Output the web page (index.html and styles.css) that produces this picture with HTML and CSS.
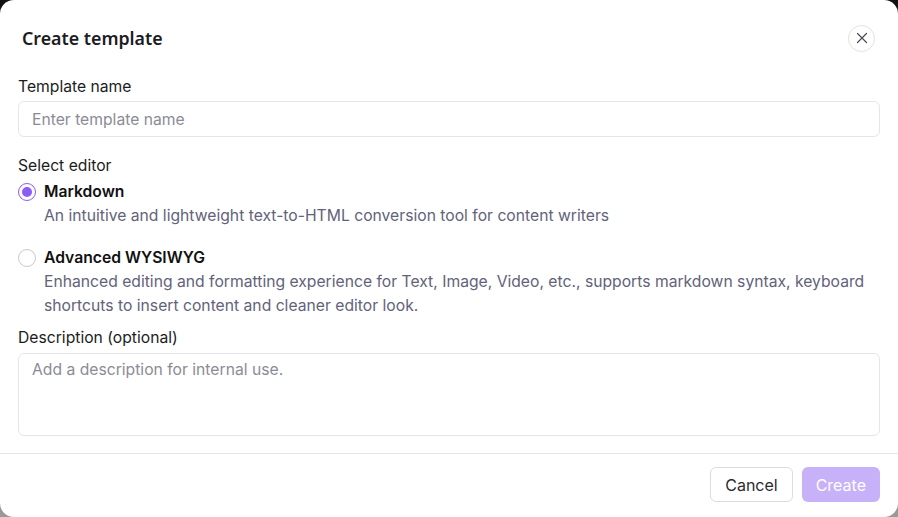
FILE: index.html
```html
<!DOCTYPE html>
<html lang="en">
<head>
  <meta charset="UTF-8" />
  <title>Create template</title>
  <link rel="stylesheet" href="styles.css">
</head>
<body>
  <div class="modal">
    <div class="modal-header">
      <h2 class="modal-title">Create template</h2>
      <button class="close-btn" aria-label="Close">
        <svg width="12" height="12" viewBox="0 0 12 12">
          <path d="M1.5 1.5 L10.5 10.5 M10.5 1.5 L1.5 10.5" stroke="#4b4b55" stroke-width="1.2" fill="none" stroke-linecap="round"/>
        </svg>
      </button>
    </div>

    <div class="modal-body">
      <div class="field">
        <label class="field-label">Template name</label>
        <input class="text-input" type="text" placeholder="Enter template name">
      </div>

      <div class="field field-editor">
        <label class="field-label">Select editor</label>
        <div class="option">
          <span class="radio checked"></span>
          <div class="option-text">
            <div class="option-title">Markdown</div>
            <div class="option-desc">An intuitive and lightweight text-to-HTML conversion tool for content writers</div>
          </div>
        </div>
        <div class="option">
          <span class="radio"></span>
          <div class="option-text">
            <div class="option-title">Advanced WYSIWYG</div>
            <div class="option-desc">Enhanced editing and formatting experience for Text, Image, Video, etc., supports markdown syntax, keyboard shortcuts to insert content and cleaner editor look.</div>
          </div>
        </div>
      </div>

      <div class="field">
        <label class="field-label">Description (optional)</label>
        <textarea class="text-area" placeholder="Add a description for internal use."></textarea>
      </div>
    </div>

    <div class="modal-footer">
      <button class="btn btn-cancel">Cancel</button>
      <button class="btn btn-create" disabled>Create</button>
    </div>
  </div>
</body>
</html>
```

FILE: styles.css
```css
html, body {
  height: 100%;
}

body {
  margin: 0;
  font-family: 'Inter', 'Liberation Sans', sans-serif;
  background: linear-gradient(to bottom, #111 0%, #3a3a3a 40%, #9a9a9a 100%);
  color: #1c1c22;
}

.modal {
  background: #fff;
  height: 100%;
  border-radius: 14px;
  display: flex;
  flex-direction: column;
  box-sizing: border-box;
}

.modal-header {
  display: flex;
  justify-content: space-between;
  align-items: center;
  padding: 24px 23px 0 22px;
  height: 28px;
  flex-shrink: 0;
}

.modal-title {
  margin: 0;
  font-family: 'Noto Sans', sans-serif;
  font-size: 17.8px;
  font-weight: 600;
  color: #1c1c22;
}

.close-btn {
  width: 27px;
  height: 27px;
  border-radius: 50%;
  border: 1px solid #e2e2e6;
  background: #fff;
  display: flex;
  align-items: center;
  justify-content: center;
  padding: 0;
  cursor: pointer;
}

.modal-body {
  padding: 25px 18px 0 18px;
  flex: 1;
}

.field {
  margin-bottom: 19px;
}

.field:last-child {
  margin-bottom: 0;
}

.field-editor {
  margin-bottom: 10px;
}

.field-label {
  display: block;
  font-size: 15.7px;
  line-height: 20px;
  color: #1c1c22;
  margin-bottom: 4px;
}

.field-editor .field-label {
  margin-bottom: 6px;
}

.text-input, .text-area {
  display: block;
  width: 100%;
  box-sizing: border-box;
  border: 1px solid #e6e6ea;
  border-radius: 6px;
  font-family: 'Inter', sans-serif;
  font-size: 15.7px;
  color: #1c1c22;
  padding: 0 13px;
  outline: none;
}

.text-input {
  height: 36px;
}

.text-area {
  height: 83px;
  margin-top: 5px;
  padding-top: 6px;
  resize: none;
}

.text-input::placeholder, .text-area::placeholder {
  color: #8b8b96;
}

.option {
  display: flex;
  align-items: flex-start;
  gap: 8px;
  margin-bottom: 20px;
}

.option:last-child {
  margin-bottom: 0;
}

.radio {
  width: 18px;
  height: 18px;
  border: 1px solid #c9c9cf;
  border-radius: 50%;
  flex-shrink: 0;
  margin-top: 1px;
  box-sizing: border-box;
  position: relative;
}

.radio.checked {
  border: 1.5px solid #8b5cf6;
}

.radio.checked::after {
  content: "";
  position: absolute;
  top: 2.5px;
  left: 2.5px;
  width: 10px;
  height: 10px;
  border-radius: 50%;
  background: #8b5cf6;
}

.option-text {
  flex: 1;
}

.option-title {
  font-size: 15.7px;
  font-weight: 600;
  line-height: 20px;
  color: #111;
}

.option-desc {
  font-size: 15.7px;
  line-height: 24px;
  margin-top: 2px;
  color: #62627a;
}

.modal-footer {
  border-top: 1px solid #e6e6ea;
  display: flex;
  justify-content: flex-end;
  gap: 9px;
  padding: 13px 18px 15px 18px;
}

.btn {
  height: 35px;
  border-radius: 6px;
  font-family: 'Inter', sans-serif;
  font-size: 16px;
  padding: 0 14px;
  cursor: pointer;
}

.btn-cancel {
  background: #fff;
  border: 1px solid #dcdce0;
  color: #2a2a33;
}

.btn-create {
  background: #c7b1f8;
  border: none;
  color: #fff;
}
```
